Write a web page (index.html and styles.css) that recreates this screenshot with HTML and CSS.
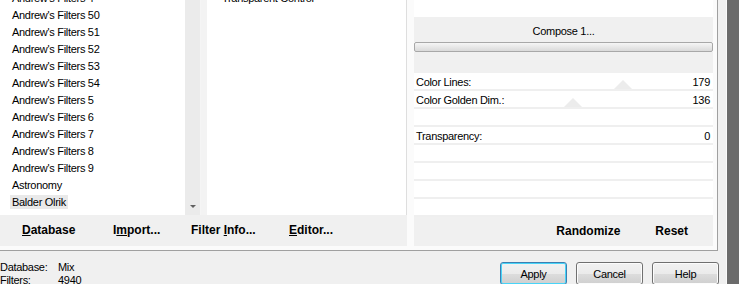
FILE: index.html
```html
<!DOCTYPE html>
<html lang="en">
<head>
    <meta charset="UTF-8">
    <title>Filters Unlimited</title>
    <link rel="stylesheet" href="styles.css">
</head>
<body>
    <div class="screen">
        <div class="dialog">
            <div class="group">
                <!-- Category list and filter list -->
                <div class="browser">
                    <div class="lists">
                        <ul class="category-list">
                            <li>Andrew's Filters 4</li>
                            <li>Andrew's Filters 50</li>
                            <li>Andrew's Filters 51</li>
                            <li>Andrew's Filters 52</li>
                            <li>Andrew's Filters 53</li>
                            <li>Andrew's Filters 54</li>
                            <li>Andrew's Filters 5</li>
                            <li>Andrew's Filters 6</li>
                            <li>Andrew's Filters 7</li>
                            <li>Andrew's Filters 8</li>
                            <li>Andrew's Filters 9</li>
                            <li>Astronomy</li>
                            <li><span class="selected">Balder Olrik</span></li>
                            <li>Bkg Designer</li>
                        </ul>
                        <div class="scrollbar"><span class="arrow-down"></span></div>
                        <div class="divider"></div>
                        <ul class="filter-list">
                            <li>Transparent Control</li>
                        </ul>
                    </div>
                    <div class="toolbar">
                        <span class="tool"><u>D</u>atabase</span>
                        <span class="tool">I<u>m</u>port...</span>
                        <span class="tool">Filter <u>I</u>nfo...</span>
                        <span class="tool"><u>E</u>ditor...</span>
                    </div>
                </div>

                <!-- Parameters of the selected filter -->
                <div class="params">
                    <div class="preview-top"></div>
                    <div class="compose">Compose 1...</div>
                    <div class="track"></div>
                    <div class="track-space"></div>
                    <div class="rows">
                        <div class="row">
                            <span>Color Lines:</span><span>179</span>
                            <i class="thumb" style="left: 200px"></i>
                        </div>
                        <div class="row">
                            <span>Color Golden Dim.:</span><span>136</span>
                            <i class="thumb" style="left: 150px"></i>
                        </div>
                        <div class="row"></div>
                        <div class="row">
                            <span>Transparency:</span><span>0</span>
                        </div>
                        <div class="row"></div>
                        <div class="row"></div>
                        <div class="row"></div>
                        <div class="row"></div>
                    </div>
                    <div class="param-bar">
                        <span class="tool">Randomize</span>
                        <span class="tool">Reset</span>
                    </div>
                </div>
            </div>

            <div class="footer">
                <div class="status">
                    <div><span class="label">Database:</span>Mix</div>
                    <div><span class="label">Filters:</span>4940</div>
                </div>
                <div class="buttons">
                    <button class="btn btn-default">Apply</button>
                    <button class="btn">Cancel</button>
                    <button class="btn">Help</button>
                </div>
            </div>
        </div>
        <div class="edge"></div>
    </div>
</body>
</html>
```

FILE: styles.css
```css
* {
    box-sizing: border-box;
}
body {
    margin: 0;
    font-family: 'Liberation Sans', Arial, sans-serif;
    font-size: 11px;
    letter-spacing: -0.3px;
    color: #000;
    background-color: #f0f0f0;
    overflow: hidden;
}
.screen {
    display: flex;
    width: 739px;
    height: 284px;
    overflow: hidden;
}
.dialog {
    width: 727px;
    display: flex;
    flex-direction: column;
    background-color: #f0f0f0;
    border-right: 1px solid #fafafa;
}
.edge {
    flex: 1;
    background-color: #6b6b6b;
}

/* Main group box */
.group {
    display: flex;
    width: 718px;
    height: 251px;
    background-color: #fbfbfb;
    border-right: 1px solid #a0a0a0;
    border-bottom: 1px solid #a0a0a0;
}
.browser {
    width: 407px;
    display: flex;
    flex-direction: column;
}
.lists {
    display: flex;
    height: 215px;
    overflow: hidden;
}
ul {
    margin: 0;
    padding: 0;
    list-style: none;
    background-color: white;
    overflow: hidden;
}
li {
    height: 17px;
    line-height: 17px;
    white-space: nowrap;
}
.category-list {
    width: 185px;
    padding: 0 0 0 12px;
}
.category-list li:first-child,
.filter-list li:first-child {
    margin-top: -10px;
}
.selected {
    background-color: #e9e9e9;
    padding: 1px 2px;
    margin-left: -2px;
}
.scrollbar {
    width: 16px;
    background-color: #ebebeb;
    border-right: 1px solid #f5f5f5;
    position: relative;
}
.arrow-down {
    position: absolute;
    left: 5px;
    bottom: 7px;
    border-left: 3px solid transparent;
    border-right: 3px solid transparent;
    border-top: 3px solid #606060;
}
.divider {
    width: 6px;
    background-color: #f3f3f3;
}
.filter-list {
    width: 200px;
    padding-left: 15px;
    border-right: 1px solid #dedede;
}

.toolbar {
    display: grid;
    grid-template-columns: 91px 78px 98px auto;
    align-items: center;
    height: 31px;
    padding-left: 22px;
    padding-bottom: 1px;
    background-color: #f0f0f0;
}
.tool {
    font-size: 12px;
    font-weight: bold;
    letter-spacing: 0;
}

/* Parameter panel */
.params {
    width: 299px;
    margin-left: 7px;
    display: flex;
    flex-direction: column;
}
.preview-top {
    height: 17px;
    background-color: white;
}
.compose {
    height: 25px;
    padding-top: 3px;
    line-height: 22px;
    text-align: center;
    background-color: #f0f0f0;
}
.track {
    height: 10px;
    border: 1px solid #a8a8a8;
    border-radius: 2px;
    background: linear-gradient(#f6f6f6, #dadada);
}
.track-space {
    height: 21px;
    background-color: #f0f0f0;
}
.rows {
    display: flex;
    flex-direction: column;
}
.row {
    position: relative;
    display: flex;
    justify-content: space-between;
    height: 18px;
    line-height: 16px;
    padding: 1px 3px 0 2px;
    background-color: white;
    border-bottom: 2px solid #efefef;
}
.row span {
    position: relative;
    z-index: 1;
}
.thumb {
    position: absolute;
    bottom: 0;
    width: 18px;
    border-left: 9px solid transparent;
    border-right: 9px solid transparent;
    border-bottom: 9px solid #ececec;
}
.param-bar {
    display: flex;
    justify-content: flex-end;
    align-items: center;
    gap: 35px;
    height: 29px;
    padding-right: 25px;
    padding-bottom: 1px;
    background-color: #f0f0f0;
}

/* Footer */
.footer {
    display: flex;
    justify-content: space-between;
    height: 33px;
}
.status {
    padding-top: 10px;
    line-height: 13px;
}
.label {
    display: inline-block;
    width: 58px;
}
.buttons {
    display: flex;
    gap: 9px;
    padding-top: 11px;
    padding-right: 7px;
}
.btn {
    width: 67px;
    height: 23px;
    font-family: 'Liberation Sans', Arial, sans-serif;
    font-size: 11px;
    letter-spacing: -0.3px;
    color: #000;
    border: 1px solid #707070;
    border-radius: 3px;
    background: linear-gradient(#f2f2f2 0%, #ebebeb 50%, #dddddd 51%, #cfcfcf 100%);
    box-shadow: inset 0 0 0 1px #fcfcfc;
    padding: 0;
}
.btn-default {
    border-color: #3c7fb1;
    box-shadow: inset 0 0 0 1px #48d4f8;
}
```
